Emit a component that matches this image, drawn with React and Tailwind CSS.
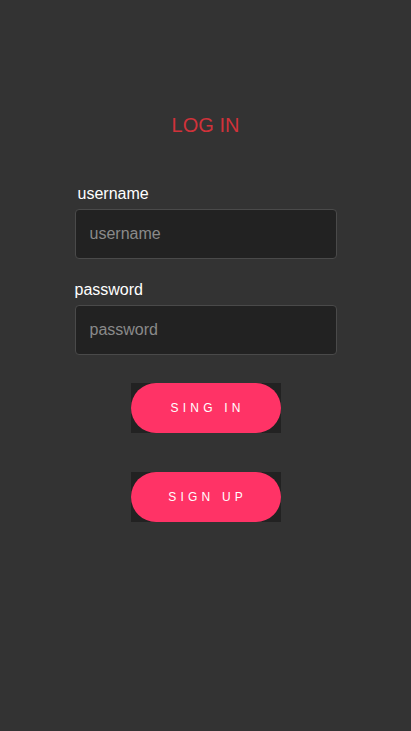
export default function App() {
  return (
    <div className="w-full min-h-[731px] bg-[#333333] flex flex-col items-center font-['Liberation_Sans',Arial,sans-serif]">
      <h1 className="mt-[113px] text-[20px] leading-[24px] text-[#d0323a]">LOG IN</h1>

      <div className="mt-[48px] w-[262px] flex flex-col">
        <label className="pl-[3px] text-[16px] leading-[18px] text-white">username</label>
        <input
          type="text"
          placeholder="username"
          className="mt-[6px] h-[50px] w-full rounded-[4px] border border-[#4a4a4a] bg-[#222222] px-[14px] text-[16px] text-white placeholder:text-[#8a8a8a] outline-none"
        />

        <label className="mt-[22px] text-[16px] leading-[18px] text-white">password</label>
        <input
          type="password"
          placeholder="password"
          className="mt-[6px] h-[50px] w-full rounded-[4px] border border-[#4a4a4a] bg-[#222222] px-[14px] text-[16px] text-white placeholder:text-[#8a8a8a] outline-none"
        />
      </div>

      <div className="mt-[28px] bg-[#222222]">
        <button className="block w-[150px] h-[50px] rounded-full bg-[#ff3366] text-white text-[12px] tracking-[0.35em] pl-[0.35em]">
          SING IN
        </button>
      </div>

      <div className="mt-[39px] bg-[#222222]">
        <button className="block w-[150px] h-[50px] rounded-full bg-[#ff3366] text-white text-[12px] tracking-[0.35em] pl-[0.35em]">
          SIGN UP
        </button>
      </div>
    </div>
  );
}
